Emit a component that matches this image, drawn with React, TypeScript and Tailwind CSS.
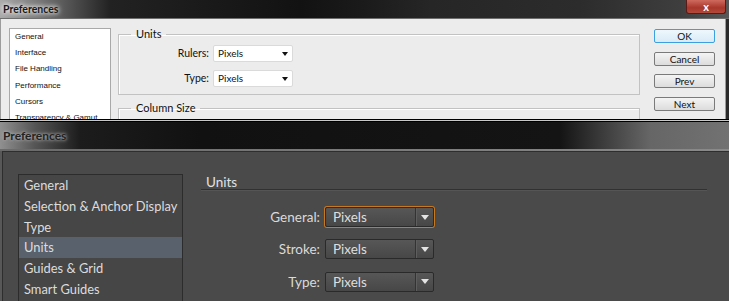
const psNav = ['General', 'Interface', 'File Handling', 'Performance', 'Cursors', 'Transparency & Gamut'];
const aiNav = ['General', 'Selection & Anchor Display', 'Type', 'Units', 'Guides & Grid', 'Smart Guides'];

function PsSelect({ value }: { value: string }) {
    return (
        <div className="w-[80px] h-[17px] flex items-center justify-between bg-white border border-[#dadada] rounded-[2px] pl-[4px] pr-[4px] text-[10px] text-[#111]">
            <span>{value}</span>
            <svg width="6" height="4" viewBox="0 0 6 4"><path d="M0 0h6L3 4z" fill="#111" /></svg>
        </div>
    );
}

function PsButton({ label, focused }: { label: string; focused?: boolean }) {
    return (
        <div
            className={`h-[14px] w-[61px] flex items-center justify-center rounded-[2px] border text-[10px] leading-none text-[#111] ${
                focused
                    ? 'border-[#3c9fe0] bg-[linear-gradient(#eef7fd,#d9ebf7)]'
                    : 'border-[#7a7a7a] bg-[linear-gradient(#f4f4f4,#dcdcdc)]'
            }`}
        >
            {label}
        </div>
    );
}

function AiSelect({ value, focused }: { value: string; focused?: boolean }) {
    return (
        <div
            className={`w-[109px] h-[20px] flex items-stretch rounded-[2px] border border-[#2a2a2a] bg-[linear-gradient(#575757,#474747)] ${
                focused ? 'ring-1 ring-[#c8781f]' : ''
            }`}
        >
            <span className="flex-1 pl-[7px] text-[13.5px] leading-[18px] text-[#dedede]">{value}</span>
            <div className="w-[18px] flex items-center justify-center border-l border-[#333] shadow-[inset_1px_0_0_#5e5e5e]">
                <svg width="8" height="5" viewBox="0 0 8 5"><path d="M0 0h8L4 5z" fill="#e4e4e4" /></svg>
            </div>
        </div>
    );
}

export default function App() {
    return (
        <div className="w-[729px] h-[301px] overflow-hidden bg-[#2a2a2a] font-['Lato',sans-serif]">
            {/* Photoshop (light) */}
            <div className="h-[119px] overflow-hidden flex flex-col">
                <div className="h-[19px] shrink-0 flex items-start justify-between border-b border-[#6e6e6e] bg-[linear-gradient(90deg,#aaaaaa_0px,#6a6a6a_50px,#222_110px,#121212_300px,#1a1a1a_360px,#262626_430px,#2c2c2c_580px,#3e3e3e_680px,#585858_729px)]">
                    <span className="pl-[3px] pt-[3px] text-[10.5px] font-bold leading-[12px] text-[#1a1a1a] [text-shadow:0_0_4px_#fff,0_0_6px_#fff]">
                        Preferences
                    </span>
                    <div className="mr-[3px] w-[40px] h-[14px] flex items-center justify-center rounded-b-[3px] border border-t-0 border-[#5b1a15] bg-[linear-gradient(#cf6a5f,#a8362b_60%,#b24a3c)] text-[11px] font-bold leading-none text-white">
                        x
                    </div>
                </div>
                <div className="flex-1 w-[726px] flex border-l border-r border-[#9c9c9c] bg-[#ececec] pl-[8px] pt-[9px]">
                    <div className="w-[102px] h-[110px] shrink-0 bg-white border border-[#a9a9a9] pl-[5px] font-['Liberation_Sans',sans-serif] text-[8px] leading-[16.2px] text-[#111]">
                        {psNav.map((n) => (
                            <div key={n}>{n}</div>
                        ))}
                    </div>
                    <div className="ml-[7px] w-[522px] shrink-0 flex flex-col">
                        <fieldset className="-mt-[1px] border border-[#c2c2c2] shadow-[inset_1px_1px_0_#fff] pb-[7px]">
                            <legend className="ml-[12px] px-[5px] text-[11px] leading-[14px] text-[#111]">Units</legend>
                            <div className="flex flex-col gap-[8px] pt-[4px]">
                                {[['Rulers:', 'Pixels'], ['Type:', 'Pixels']].map(([l, v]) => (
                                    <div key={l} className="flex items-center gap-[4px]">
                                        <span className="w-[90px] text-right text-[10.5px] text-[#111]">{l}</span>
                                        <PsSelect value={v} />
                                    </div>
                                ))}
                            </div>
                        </fieldset>
                        <fieldset className="mt-[6px] h-[40px] border border-[#c2c2c2] shadow-[inset_1px_1px_0_#fff]">
                            <legend className="ml-[12px] px-[5px] text-[11px] leading-[14px] text-[#111]">Column Size</legend>
                        </fieldset>
                    </div>
                    <div className="ml-[14px] mt-[1px] flex flex-col gap-[8.6px]">
                        <PsButton label="OK" focused />
                        <PsButton label="Cancel" />
                        <PsButton label="Prev" />
                        <PsButton label="Next" />
                    </div>
                </div>
            </div>
            <div className="h-[3px] border-y border-black bg-[#c8c8c8]" />

            {/* Illustrator (dark) */}
            <div className="h-[179px] flex flex-col">
                <div className="h-[27px] shrink-0 flex items-center bg-[linear-gradient(90deg,#909090_0px,#555_35px,#1c1c1c_80px,#111_200px,#141414_560px,#3e3e3e_605px,#666_650px,#727272_729px)]">
                    <span className="pl-[3px] text-[12px] font-bold text-[#222] [text-shadow:0_0_3px_#bbb,0_0_5px_#999]">Preferences</span>
                </div>
                <div className="h-[2px] shrink-0 bg-[linear-gradient(90deg,#6a6a6a,#8a8a8a)]" />
                <div className="flex-1 flex bg-[#585858] pl-[2px]">
                    <div className="flex-1 flex border-l border-t border-[#2e2e2e] bg-[#4a4a4a] pl-[15px] pt-[22px]">
                        <div className="w-[165px] h-[140px] shrink-0 border border-[#2c2c2c] bg-[#464646] text-[12.9px] text-[#dcdcdc]">
                            {aiNav.map((n) => (
                                <div
                                    key={n}
                                    className={`h-[20.8px] leading-[20.8px] pl-[5px] whitespace-nowrap ${n === 'Units' ? 'bg-[#59616c]' : ''}`}
                                >
                                    {n}
                                </div>
                            ))}
                        </div>
                        <div className="ml-[18px] w-[506px] flex flex-col">
                            <div className="h-[16px] leading-[16px] pl-[5px] text-[13.5px] text-[#e2e2e2] border-b border-[#313131] shadow-[0_1px_0_#555]">
                                Units
                            </div>
                            <div className="mt-[17px] flex flex-col gap-[12px]">
                                {['General:', 'Stroke:', 'Type:'].map((l, i) => (
                                    <div key={l} className="flex items-center gap-[5px]">
                                        <span className="w-[119px] text-right text-[13.5px] text-[#dadada]">{l}</span>
                                        <AiSelect value="Pixels" focused={i === 0} />
                                    </div>
                                ))}
                            </div>
                        </div>
                    </div>
                </div>
            </div>
        </div>
    );
}
